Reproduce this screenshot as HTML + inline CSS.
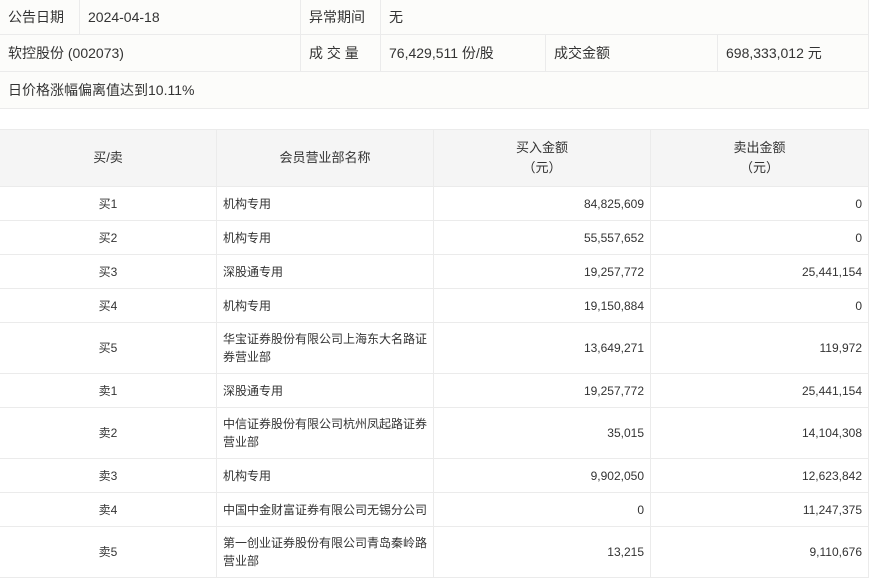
<!DOCTYPE html>
<html><head><meta charset="utf-8"><style>
*{margin:0;padding:0;box-sizing:border-box}
body{width:869px;height:573px;overflow:hidden;background:#fff;font-family:"Liberation Sans","Noto Sans CJK SC",sans-serif;color:#333}
table{border-collapse:collapse;table-layout:fixed}
td,th{border:1px solid #ebebeb;font-weight:normal}
.t1{position:absolute;left:-1px;top:-1px;width:869px;background:#fcfcfa;font-size:14px}
.t1 td{height:37px;padding-left:8px}
.t1 tr:first-child td{height:35px}
.t2{position:absolute;left:-1px;top:129px;width:869px;font-size:12px}
.t2 th{background:#f5f5f5;height:57px;text-align:center;font-size:13px;line-height:20px}
.t2 td{height:34px;line-height:18px}
.t2 td.c{text-align:center}
.t2 td.l{padding-left:6px}
.t2 td.r{text-align:right;padding-right:6px}
.t2 tr.tall td{height:51px}
</style></head><body>
<table class="t1">
<colgroup><col style="width:80px"><col style="width:221px"><col style="width:80px"><col style="width:165px"><col style="width:172px"><col style="width:151px"></colgroup>
<tr><td>公告日期</td><td>2024-04-18</td><td>异常期间</td><td colspan="3">无</td></tr>
<tr><td colspan="2">软控股份 (002073)</td><td>成 交 量</td><td>76,429,511 份/股</td><td>成交金额</td><td>698,333,012 元</td></tr>
<tr><td colspan="6">日价格涨幅偏离值达到10.11%</td></tr>
</table>
<table class="t2">
<colgroup><col style="width:217px"><col style="width:217px"><col style="width:217px"><col style="width:218px"></colgroup>
<tr><th>买/卖</th><th>会员营业部名称</th><th>买入金额<br>（元）</th><th>卖出金额<br>（元）</th></tr>
<tr><td class="c">买1</td><td class="l">机构专用</td><td class="r">84,825,609</td><td class="r">0</td></tr>
<tr><td class="c">买2</td><td class="l">机构专用</td><td class="r">55,557,652</td><td class="r">0</td></tr>
<tr><td class="c">买3</td><td class="l">深股通专用</td><td class="r">19,257,772</td><td class="r">25,441,154</td></tr>
<tr><td class="c">买4</td><td class="l">机构专用</td><td class="r">19,150,884</td><td class="r">0</td></tr>
<tr class="tall"><td class="c">买5</td><td class="l">华宝证券股份有限公司上海东大名路证券营业部</td><td class="r">13,649,271</td><td class="r">119,972</td></tr>
<tr><td class="c">卖1</td><td class="l">深股通专用</td><td class="r">19,257,772</td><td class="r">25,441,154</td></tr>
<tr class="tall"><td class="c">卖2</td><td class="l">中信证券股份有限公司杭州凤起路证券营业部</td><td class="r">35,015</td><td class="r">14,104,308</td></tr>
<tr><td class="c">卖3</td><td class="l">机构专用</td><td class="r">9,902,050</td><td class="r">12,623,842</td></tr>
<tr><td class="c">卖4</td><td class="l">中国中金财富证券有限公司无锡分公司</td><td class="r">0</td><td class="r">11,247,375</td></tr>
<tr class="tall"><td class="c">卖5</td><td class="l">第一创业证券股份有限公司青岛秦岭路营业部</td><td class="r">13,215</td><td class="r">9,110,676</td></tr>
</table>
</body></html>
